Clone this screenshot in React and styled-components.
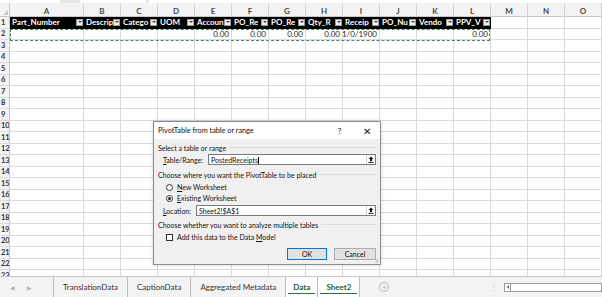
import React from 'react';
import styled, { createGlobalStyle } from 'styled-components';

const GlobalStyle = createGlobalStyle`
  html, body {
    margin: 0;
    padding: 0;
    background: #ffffff;
    overflow: hidden;
  }
  body {
    font-family: Lato, "Open Sans", sans-serif;
  }
`;

const COLS = ['A', 'B', 'C', 'D', 'E', 'F', 'G', 'H', 'I', 'J', 'K', 'L', 'M', 'N', 'O'];
// header names as far as they show before the filter buttons
const HEADERS = [
  'Part_Number', 'Descrip', 'Catego', 'UOM', 'Accoun', 'PO_Re',
  'PO_Re', 'Qty_R', 'Receip', 'PO_Nu', 'Vendo', 'PPV_V',
];
const ROW2 = { E: '0.00', F: '0.00', G: '0.00', H: '0.00', I: '1/0/1900', L: '0.00' };
const ROW_COUNT = 23;

const Screen = styled.div`
  width: 602px;
  height: 297px;
  display: flex;
  flex-direction: column;
  position: relative;
  overflow: hidden;
  background: #fff;
`;

const TopStrip = styled.div`
  height: 3px;
  display: flex;
  background: #e6e6e6;
`;

const StripBox = styled.div`
  width: ${p => p.w}px;
  margin-right: ${p => p.gap || 0}px;
  background: #fff;
  flex: ${p => (p.grow ? 1 : 'none')};
`;

const SheetArea = styled.div`
  position: relative;
  height: 273px;
  overflow: hidden;
`;

const Grid = styled.div`
  display: grid;
  grid-template-columns: 10px 74px repeat(14, 37px);
  grid-template-rows: 14px repeat(${ROW_COUNT}, 11.5px);
`;

const Corner = styled.div`
  background: #f3f3f3;
  border-right: 1px solid #c8c8c8;
  border-bottom: 1px solid #c8c8c8;
  box-sizing: border-box;
  position: relative;
  &::after {
    content: '';
    position: absolute;
    right: 1px;
    bottom: 1px;
    border-left: 5px solid transparent;
    border-bottom: 5px solid #c9c9c9;
  }
`;

const ColHead = styled.div`
  background: #f3f3f3;
  border-right: 1px solid #d2d2d2;
  border-bottom: 1px solid #c8c8c8;
  box-sizing: border-box;
  display: flex;
  align-items: center;
  justify-content: center;
  font-size: 8px;
  font-weight: 700;
  color: #4a4a4a;
  padding-top: 2px;
`;

const RowHead = styled.div`
  background: #f3f3f3;
  border-right: 1px solid #c8c8c8;
  border-bottom: 1px solid #dcdcdc;
  box-sizing: border-box;
  display: flex;
  align-items: center;
  justify-content: flex-start;
  padding-left: 1px;
  font-size: 7.5px;
  font-weight: 700;
  color: #333;
  overflow: hidden;
`;

const Cell = styled.div`
  box-sizing: border-box;
  border-right: 1px solid ${p => (p.dark ? '#000' : '#dadada')};
  border-bottom: 1px solid ${p => (p.dark ? '#000' : '#dadada')};
  background: ${p => (p.dark ? '#000' : '#fff')};
  color: ${p => (p.dark ? '#fff' : '#1f1f1f')};
  font-weight: ${p => (p.dark ? 700 : 400)};
  font-size: 8px;
  display: flex;
  align-items: center;
  justify-content: ${p => (p.right ? 'flex-end' : 'flex-start')};
  padding: 0 ${p => (p.right ? '2px' : '0')} 0 2px;
  white-space: nowrap;
  overflow: hidden;
  min-width: 0;
`;

const HeadText = styled.span`
  flex: 1;
  overflow: hidden;
  min-width: 0;
`;

const FilterBtn = styled.span`
  flex: none;
  width: 7px;
  height: 7px;
  background: #eeeeee;
  border: 1px solid #9a9a9a;
  box-sizing: border-box;
  display: flex;
  align-items: center;
  justify-content: center;
  &::after {
    content: '';
    border-left: 2px solid transparent;
    border-right: 2px solid transparent;
    border-top: 2px solid #444;
  }
`;

const Marquee = styled.div`
  position: absolute;
  left: 10px;
  top: 26px;
  width: 480px;
  height: 12px;
  box-sizing: border-box;
  border: 1px dashed #3f8a5a;
  pointer-events: none;
`;

/* ---------- dialog ---------- */

const Dialog = styled.div`
  position: absolute;
  left: 153px;
  top: 121px;
  width: 228px;
  height: 144px;
  box-sizing: border-box;
  border: 1px solid #8c8c8c;
  box-shadow: 0 0 4px rgba(0, 0, 0, 0.18);
  background: #f0f0f0;
  display: flex;
  flex-direction: column;
  font-family: Lato, "Noto Sans", sans-serif;
  font-size: 7px;
  color: #111;
`;

const TitleBar = styled.div`
  height: 17px;
  background: #fff;
  display: flex;
  align-items: center;
  padding: 0 0 0 4px;
  flex: none;
`;

const TitleText = styled.span`
  flex: 1;
  font-size: 7.3px;
`;

const TitleBtn = styled.span`
  width: 27px;
  text-align: center;
  font-size: ${p => p.size || 8}px;
  color: #222;
`;

const Body = styled.div`
  flex: 1;
  display: flex;
  flex-direction: column;
  padding: 4px 4px 0 4px;
  position: relative;
`;

const GroupLabel = styled.div`
  display: flex;
  align-items: center;
  height: 9px;
  margin-top: ${p => p.mt || 0}px;
  &::after {
    content: '';
    flex: 1;
    height: 1px;
    background: #dcdcdc;
    margin-left: 3px;
  }
`;

const FieldRow = styled.div`
  display: flex;
  align-items: center;
  height: 11px;
  margin-top: ${p => p.mt || 0}px;
  padding-left: 5px;
`;

const FieldLabel = styled.span`
  width: ${p => p.w}px;
  flex: none;
`;

const Input = styled.div`
  flex: 1;
  height: 11px;
  box-sizing: border-box;
  border: 1px solid #7a7a7a;
  background: #fff;
  display: flex;
  align-items: center;
  padding-left: 2px;
`;

const InputText = styled.span`
  flex: 1;
  &::after {
    content: '';
    display: ${p => (p.caret ? 'inline-block' : 'none')};
    width: 1px;
    height: 7px;
    background: #000;
    vertical-align: -1px;
  }
`;

const RefBtn = styled.span`
  width: 8px;
  height: 9px;
  border-left: 1px solid #cfcfcf;
  display: flex;
  align-items: center;
  justify-content: center;
`;

const OptionRow = styled.div`
  display: flex;
  align-items: center;
  height: 10px;
  margin-top: ${p => p.mt || 0}px;
  padding-left: 8px;
  gap: 4px;
`;

const Radio = styled.span`
  width: 7px;
  height: 7px;
  box-sizing: border-box;
  border-radius: 50%;
  border: 1px solid #333;
  background: #fff;
  display: flex;
  align-items: center;
  justify-content: center;
  &::after {
    content: '';
    width: 3px;
    height: 3px;
    border-radius: 50%;
    background: ${p => (p.checked ? '#222' : 'transparent')};
  }
`;

const Check = styled.span`
  width: 7px;
  height: 7px;
  box-sizing: border-box;
  border: 1px solid #333;
  background: #fff;
`;

const ButtonRow = styled.div`
  display: flex;
  justify-content: flex-end;
  gap: 7px;
  margin-top: 6px;
`;

const Button = styled.div`
  width: ${p => p.w || 40}px;
  height: 12px;
  box-sizing: border-box;
  border: 1px solid ${p => (p.primary ? '#0078d7' : '#adadad')};
  background: #e1e1e1;
  display: flex;
  align-items: center;
  justify-content: center;
  font-size: 7px;
`;

const Grip = styled.svg`
  position: absolute;
  right: 1px;
  bottom: 1px;
`;

const U = styled.span`
  text-decoration: underline;
`;

/* ---------- sheet tabs ---------- */

const TabBar = styled.div`
  height: 21px;
  box-sizing: border-box;
  border-top: 1px solid #c6c6c6;
  background: #f3f3f3;
  display: flex;
  align-items: stretch;
  font-size: 8px;
  color: #333;
`;

const NavArea = styled.div`
  width: 53px;
  display: flex;
  align-items: center;
  gap: 12px;
  padding-left: 10px;
  box-sizing: border-box;
  color: #b3b3b3;
  font-size: 6px;
`;

const Tab = styled.div`
  padding: 0 ${p => p.pad || 9}px;
  display: flex;
  align-items: center;
  border-left: 1px solid #bdbdbd;
  background: ${p => (p.selected ? '#fff' : 'transparent')};
  font-weight: ${p => (p.selected ? 700 : 400)};
  color: ${p => (p.selected ? '#1d5e36' : '#333')};
  position: relative;
  &::after {
    content: '';
    display: ${p => (p.selected ? 'block' : 'none')};
    position: absolute;
    left: 2px;
    right: 2px;
    bottom: 3px;
    height: 1px;
    background: #217346;
  }
`;

const TabLast = styled.div`
  border-left: 1px solid #bdbdbd;
  display: flex;
  align-items: center;
  padding-left: 19px;
  flex: none;
`;

const AddSheet = styled.span`
  width: 8px;
  height: 8px;
  border: 1px solid #bbb;
  border-radius: 50%;
  color: #aaa;
  font-size: 8px;
  line-height: 8px;
  text-align: center;
`;

const Dots = styled.div`
  margin-left: 101px;
  display: flex;
  align-items: center;
  color: #bbb;
  font-size: 8px;
`;

const Scroll = styled.div`
  margin-left: 6px;
  flex: 1;
  display: flex;
  align-items: center;
`;

const ScrollBtn = styled.span`
  width: 7px;
  height: 9px;
  box-sizing: border-box;
  border: 1px solid #9b9b9b;
  background: #fff;
  display: flex;
  align-items: center;
  justify-content: center;
  &::after {
    content: '';
    border-top: 2px solid transparent;
    border-bottom: 2px solid transparent;
    border-right: 2px solid #555;
  }
`;

const ScrollTrack = styled.span`
  flex: 1;
  height: 9px;
  box-sizing: border-box;
  border: 1px solid #9b9b9b;
  border-left: none;
  background: #fff;
`;

const RefIcon = () => (
  <svg width="6" height="7" viewBox="0 0 6 7">
    <path d="M3 0.5 L5.5 3 L4 3 L4 5 L2 5 L2 3 L0.5 3 Z" fill="#111" />
    <rect x="0.5" y="5.8" width="5" height="1" fill="#111" />
  </svg>
);

export default function App() {
  const rows = [];
  for (let r = 1; r <= ROW_COUNT; r++) {
    rows.push(<RowHead key={`rh${r}`}>{r}</RowHead>);
    COLS.forEach((c, i) => {
      if (r === 1 && i < HEADERS.length) {
        rows.push(
          <Cell key={`${c}${r}`} dark>
            <HeadText>{HEADERS[i]}</HeadText>
            <FilterBtn />
          </Cell>
        );
      } else if (r === 2 && ROW2[c]) {
        rows.push(<Cell key={`${c}${r}`} right>{ROW2[c]}</Cell>);
      } else {
        rows.push(<Cell key={`${c}${r}`} />);
      }
    });
  }

  return (
    <>
      <GlobalStyle />
      <Screen>
        <TopStrip>
          <StripBox w={60} gap={20} />
          <StripBox w={66} gap={3} />
          <StripBox grow />
        </TopStrip>
        <SheetArea>
          <Grid>
            <Corner />
            {COLS.map(c => (
              <ColHead key={c}>{c}</ColHead>
            ))}
            {rows}
          </Grid>
          <Marquee />
        </SheetArea>
        <TabBar>
          <NavArea>
            <span>◀</span>
            <span>▶</span>
          </NavArea>
          <Tab>TranslationData</Tab>
          <Tab>CaptionData</Tab>
          <Tab>Aggregated Metadata</Tab>
          <Tab selected pad={7}>Data</Tab>
          <Tab selected pad={8}>Sheet2</Tab>
          <TabLast>
            <AddSheet>+</AddSheet>
          </TabLast>
          <Dots>⋮</Dots>
          <Scroll>
            <ScrollBtn />
            <ScrollTrack />
          </Scroll>
        </TabBar>

        <Dialog>
          <TitleBar>
            <TitleText>PivotTable from table or range</TitleText>
            <TitleBtn>?</TitleBtn>
            <TitleBtn size={10}>✕</TitleBtn>
          </TitleBar>
          <Body>
            <GroupLabel>Select a table or range</GroupLabel>
            <FieldRow mt={2}>
              <FieldLabel w={45}><U>T</U>able/Range:</FieldLabel>
              <Input>
                <InputText caret>PostedReceipts</InputText>
                <RefBtn><RefIcon /></RefBtn>
              </Input>
            </FieldRow>
            <GroupLabel mt={5}>Choose where you want the PivotTable to be placed</GroupLabel>
            <OptionRow mt={3}>
              <Radio />
              <span><U>N</U>ew Worksheet</span>
            </OptionRow>
            <OptionRow mt={1}>
              <Radio checked />
              <span><U>E</U>xisting Worksheet</span>
            </OptionRow>
            <FieldRow mt={2}>
              <FieldLabel w={33}><U>L</U>ocation:</FieldLabel>
              <Input>
                <InputText>Sheet2!$A$1</InputText>
                <RefBtn><RefIcon /></RefBtn>
              </Input>
            </FieldRow>
            <GroupLabel mt={4}>Choose whether you want to analyze multiple tables</GroupLabel>
            <OptionRow mt={3}>
              <Check />
              <span>Add this data to the Data <U>M</U>odel</span>
            </OptionRow>
            <ButtonRow>
              <Button primary>OK</Button>
              <Button w={42}>Cancel</Button>
            </ButtonRow>
            <Grip width="5" height="5" viewBox="0 0 5 5">
              <rect x="3.5" y="0.5" width="1" height="1" fill="#aaa" />
              <rect x="2" y="2" width="1" height="1" fill="#aaa" />
              <rect x="3.5" y="2" width="1" height="1" fill="#aaa" />
              <rect x="0.5" y="3.5" width="1" height="1" fill="#aaa" />
              <rect x="2" y="3.5" width="1" height="1" fill="#aaa" />
              <rect x="3.5" y="3.5" width="1" height="1" fill="#aaa" />
            </Grip>
          </Body>
        </Dialog>
      </Screen>
    </>
  );
}
